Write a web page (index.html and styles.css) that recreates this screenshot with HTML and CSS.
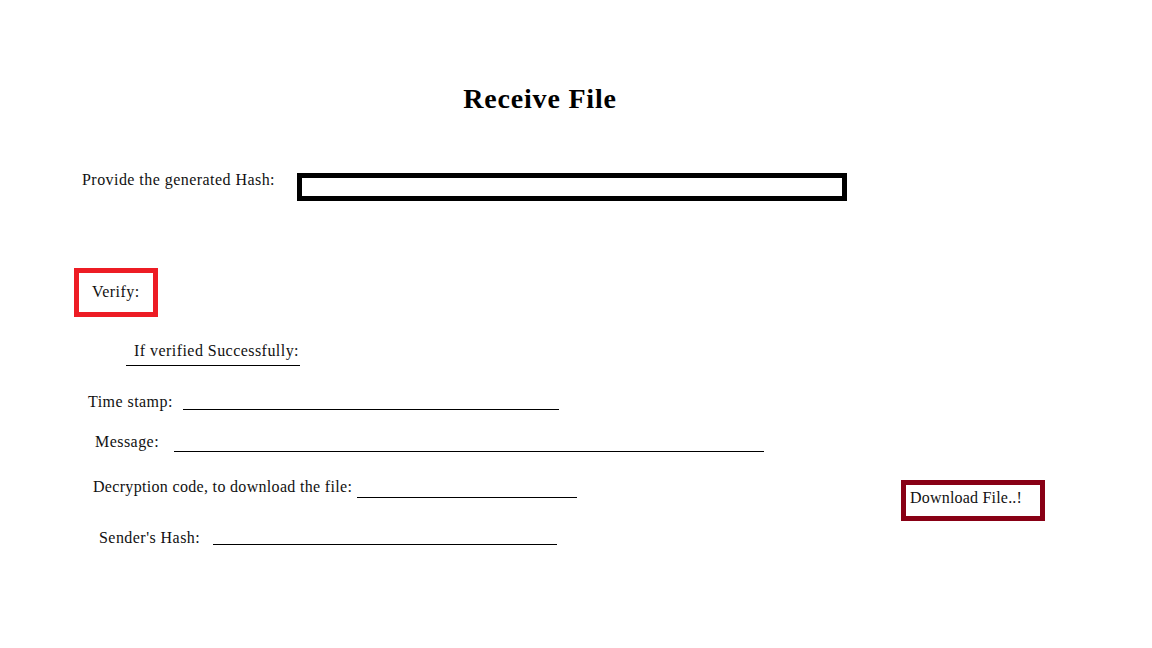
FILE: index.html
```html
<!DOCTYPE html>
<html lang="en">
<head>
<meta charset="utf-8">
<title>Receive File</title>
<link rel="stylesheet" href="styles.css">
</head>
<body>
<main class="page">
  <h1 class="title">Receive File</h1>

  <div class="row hash-row">
    <label class="label hash-label" for="hash">Provide the generated Hash:</label>
    <input class="hash-input" id="hash" type="text">
  </div>

  <div class="row verify-row">
    <button class="verify-btn" type="button">Verify:</button>
  </div>

  <div class="row success-row">
    <span class="success">If verified Successfully:</span>
  </div>

  <div class="row field time-row">
    <span class="label">Time stamp:</span>
    <span class="blank"></span>
  </div>

  <div class="row field msg-row">
    <span class="label">Message:</span>
    <span class="blank"></span>
  </div>

  <div class="row field code-row">
    <span class="label">Decryption code, to download the file:</span>
    <span class="blank"></span>
    <button class="download-btn" type="button">Download File..!</button>
  </div>

  <div class="row field sender-row">
    <span class="label">Sender's Hash:</span>
    <span class="blank"></span>
  </div>
</main>
</body>
</html>
```

FILE: styles.css
```css
* { box-sizing: border-box; }

html, body {
  margin: 0;
  padding: 0;
  background: #ffffff;
}

body {
  font-family: "Liberation Serif", "Times New Roman", serif;
  font-size: 16px;
  letter-spacing: 0.45px;
  color: #111111;
  width: 1152px;
  height: 648px;
  overflow: hidden;
}

.page {
  display: flex;
  flex-direction: column;
  padding-top: 84px;
}

.title {
  width: 1080px;
  margin: 0;
  text-align: center;
  font-size: 28px;
  line-height: 30px;
  letter-spacing: 0.8px;
  font-weight: bold;
  color: #000;
}

.row {
  display: flex;
  align-items: flex-start;
}

.label {
  line-height: 20px;
  white-space: nowrap;
}

/* hash row */
.hash-row {
  margin-top: 56px;
  padding-left: 82px;
}
.hash-label { width: 215px; }
.hash-input {
  margin-top: 3px;
  width: 550px;
  height: 28px;
  border: 5px solid #000;
  background: #fff;
  outline: none;
  padding: 0;
}

/* verify */
.verify-row {
  margin-top: 67px;
  padding-left: 74px;
}
.verify-btn {
  width: 84px;
  height: 49px;
  border: 5px solid #ed1c24;
  background: #fff;
  font: inherit;
  letter-spacing: inherit;
  color: inherit;
  text-align: left;
  padding: 9px 0 0 13px;
  line-height: 20px;
  display: flex;
  align-items: flex-start;
}

/* success */
.success-row {
  margin-top: 24px;
  padding-left: 126px;
}
.success {
  display: inline-block;
  width: 174px;
  padding: 0 0 4px 8px;
  line-height: 20px;
  border-bottom: 1px solid #000;
  white-space: nowrap;
}

/* fields */
.blank {
  display: block;
  border-bottom: 1px solid #000;
}

.time-row { margin-top: 26px; padding-left: 88px; }
.time-row .label { width: 95px; }
.time-row .blank { width: 376px; height: 18px; }

.msg-row { margin-top: 20px; padding-left: 95px; }
.msg-row .label { width: 79px; }
.msg-row .blank { width: 590px; height: 20px; }

.code-row { margin-top: 25px; padding-left: 93px; }
.code-row .label { width: 264px; letter-spacing: 0.32px; }
.code-row .blank { width: 220px; height: 21px; }

.download-btn {
  margin-left: 324px;
  margin-top: 3px;
  width: 144px;
  height: 41px;
  border: 5px solid #880015;
  background: #fff;
  font: inherit;
  letter-spacing: 0.2px;
  color: inherit;
  text-align: left;
  padding: 3px 0 0 4px;
  line-height: 20px;
  display: flex;
  align-items: flex-start;
  white-space: nowrap;
}

.sender-row { margin-top: 7px; padding-left: 99px; }
.sender-row .label { width: 114px; }
.sender-row .blank { width: 344px; height: 17px; }
```
